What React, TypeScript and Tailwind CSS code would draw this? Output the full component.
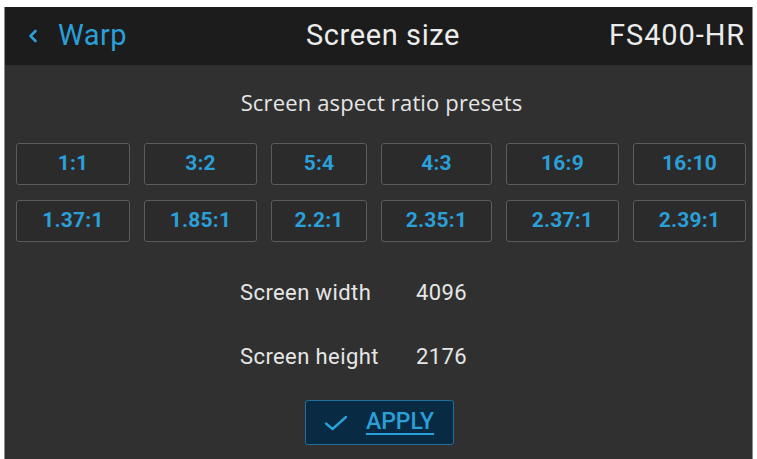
import React from "react";

const row1 = ["1:1", "3:2", "5:4", "4:3", "16:9", "16:10"];
const row2 = ["1.37:1", "1.85:1", "2.2:1", "2.35:1", "2.37:1", "2.39:1"];

function Preset({ label }: { label: string }) {
  return (
    <div className="h-[42px] flex items-center justify-center rounded-[3px] border-[1.5px] border-[#5c5c5c] bg-[#2b2b2b] text-[#2a9fd8] font-bold text-[21px] tracking-[0.2px]">
      {label}
    </div>
  );
}

export default function App() {
  return (
    <div
      className="w-[757px] h-[459px] bg-white pt-[7px] pl-[4px] pr-[4px] overflow-hidden"
      style={{ fontFamily: "Roboto, 'Liberation Sans', sans-serif" }}
    >
      <div className="h-full flex flex-col border-l border-r border-[#8a8a8a] bg-[#303030]">
        <div className="h-[58px] shrink-0 bg-[#1c1c1c] flex items-center pl-[22px] pr-[7px]">
          <div className="flex items-center w-[200px] text-[#2a9fd8]">
            <svg width="12" height="16" viewBox="0 0 12 16" className="mr-[19px]">
              <path d="M8.5 3 L3.5 8 L8.5 13" fill="none" stroke="#2a9fd8" strokeWidth="2.6" strokeLinecap="round" strokeLinejoin="round" />
            </svg>
            <span className="text-[29px] tracking-[0.5px]">Warp</span>
          </div>
          <div className="flex-1 text-center text-[#ececec] text-[29px] tracking-[0.6px] pr-[6px]">Screen size</div>
          <div className="w-[200px] text-right text-[#ececec] text-[29px] tracking-[0.9px]">FS400-HR</div>
        </div>
        <div className="flex-1 flex flex-col">
          <div
            className="pt-[25px] pl-[6px] text-center text-[#e6e6e6] text-[22px] leading-[24px] tracking-[0.15px]"
            style={{ fontFamily: "'Open Sans', Roboto, sans-serif" }}
          >
            Screen aspect ratio presets
          </div>
          <div className="mt-[29px] pl-[11px] grid grid-cols-[114px_113px_96px_111px_113px_113px] gap-x-[14px] gap-y-[15px]">
            {row1.map((l) => (
              <Preset key={l} label={l} />
            ))}
            {row2.map((l) => (
              <Preset key={l} label={l} />
            ))}
          </div>
          <div className="mt-[39px] pl-[235px] grid grid-cols-[176px_auto] gap-y-[40px] text-[#e6e6e6] text-[22px] leading-[24px] tracking-[0.4px]">
            <div>Screen width</div>
            <div>4096</div>
            <div>Screen height</div>
            <div>2176</div>
          </div>
          <div className="mt-[31px] flex justify-center">
            <div className="ml-[1px] w-[149px] h-[45px] flex items-center justify-center gap-[18px] rounded-[3px] border-[1.5px] border-[#1f6f9c] bg-[#082a42]">
              <svg width="24" height="16" viewBox="0 0 24 16">
                <path d="M2 8.5 L8.5 14 L22 2" fill="none" stroke="#2a9fd8" strokeWidth="2.4" strokeLinecap="round" strokeLinejoin="round" />
              </svg>
              <span className="text-[#2a9fd8] text-[23px] font-medium underline underline-offset-[4px] decoration-[2px]">APPLY</span>
            </div>
          </div>
        </div>
      </div>
    </div>
  );
}
